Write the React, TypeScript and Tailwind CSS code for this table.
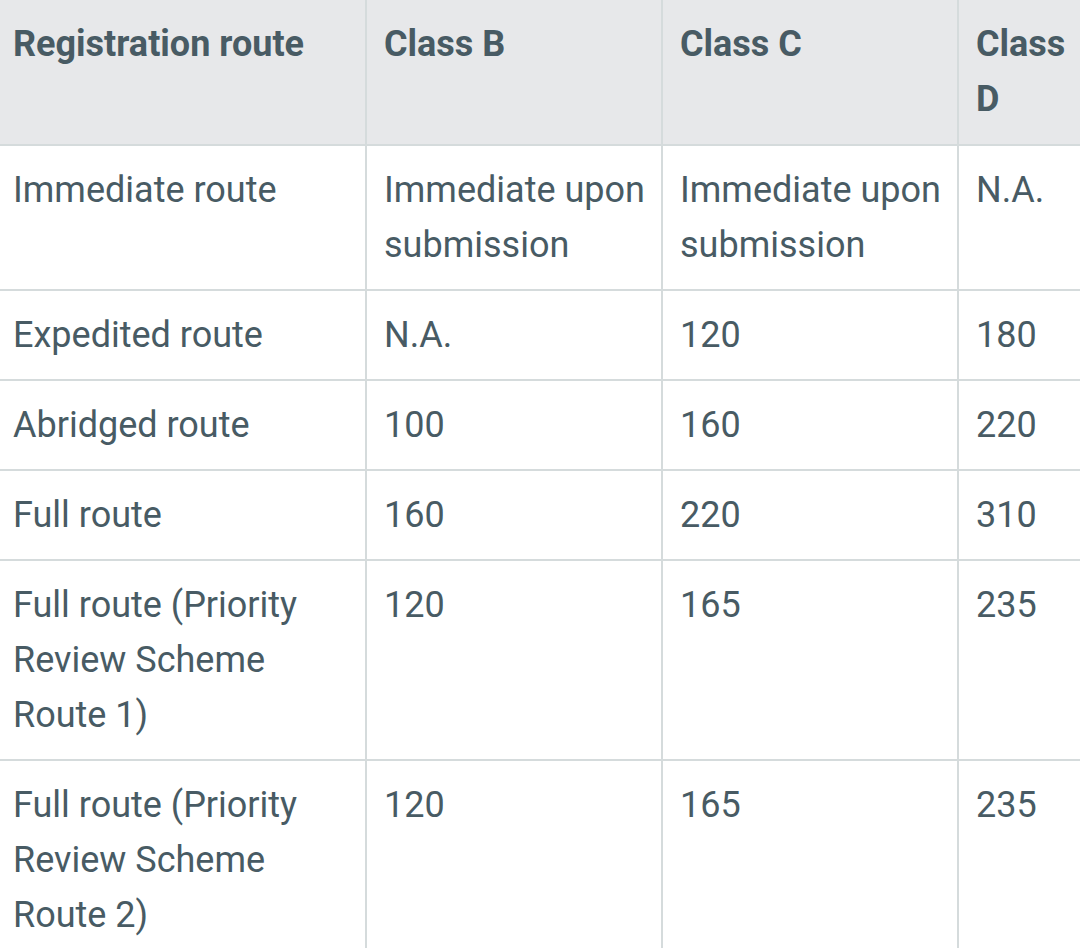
const headers = ['Registration route', 'Class B', 'Class C', 'Class D'];

const rows: string[][] = [
  ['Immediate route', 'Immediate upon submission', 'Immediate upon submission', 'N.A.'],
  ['Expedited route', 'N.A.', '120', '180'],
  ['Abridged route', '100', '160', '220'],
  ['Full route', '160', '220', '310'],
  ['Full route (Priority Review Scheme Route 1)', '120', '165', '235'],
  ['Full route (Priority Review Scheme Route 2)', '120', '165', '235'],
];

function Cell({ text, col, head }: { text: string; col: number; head?: boolean }) {
  return (
    <div
      className={`pr-[12px] ${col === 0 ? 'pl-[13px]' : 'pl-[17px] border-l-2 border-[#d5dbdc]'} ${
        head ? 'py-[17px] font-bold bg-[#e7e8ea]' : 'pt-[17px] pb-[16px] border-t-2 border-t-[#d5dbdc]'
      }`}
    >
      {text}
    </div>
  );
}

export default function App() {
  return (
    <div className="w-[1080px] h-[948px] overflow-hidden bg-white">
      <div
        className="grid grid-cols-[365px_296px_296px_128px] w-[1085px] text-[36px] leading-[55px] text-[#485b64]"
        style={{ fontFamily: 'Roboto, "Noto Sans", sans-serif' }}
      >
        {headers.map((h, i) => (
          <Cell key={h} text={h} col={i} head />
        ))}
        {rows.map((r, ri) =>
          r.map((c, ci) => <Cell key={`${ri}-${ci}`} text={c} col={ci} />)
        )}
      </div>
    </div>
  );
}
